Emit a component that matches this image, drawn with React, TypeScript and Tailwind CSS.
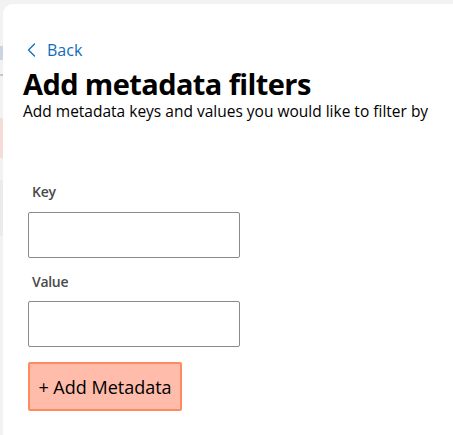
import React from "react";

export default function App() {
  return (
    <div className="flex h-[435px] w-[453px] overflow-hidden bg-[#f2f2f2]" style={{ fontFamily: "'Open Sans', 'Noto Sans', sans-serif" }}>
      <div className="flex w-[3px] shrink-0 flex-col">
        <div className="h-[46px]" />
        <div className="h-[14px] bg-[#c9d6e2]" />
        <div className="h-[14px]" />
        <div className="h-[2px] bg-[#c8c8c8]" />
        <div className="h-[42px]" />
        <div className="h-[40px] bg-[#f6dcd6]" />
        <div className="h-[22px]" />
        <div className="h-[56px] bg-[#ebebeb]" />
      </div>
      <div className="mt-[4px] flex flex-1 flex-col rounded-tl-[10px] bg-white pl-[20px]">
        <button className="mt-[36px] flex items-center gap-[11px] self-start pl-[4px] text-[16px] leading-[20px] text-[#0f6cbd]">
          <svg width="9" height="14" viewBox="0 0 9 14" fill="none">
            <path d="M7.5 1 L1.5 7 L7.5 13" stroke="#0f6cbd" strokeWidth="1.3" strokeLinecap="round" strokeLinejoin="round" />
          </svg>
          <span>Back</span>
        </button>
        <h1 className="mt-[6px] text-[29px] font-bold leading-[36px] tracking-[-0.6px] text-black">Add metadata filters</h1>
        <p className="mt-[-1px] text-[15.5px] leading-[20px] text-black">Add metadata keys and values you would like to filter by</p>
        <div className="mt-[62px] flex flex-col pl-[5px]">
          <label className="pl-[4px] text-[14px] font-semibold leading-[18px] tracking-[-0.3px] text-[#4a4a4a]">Key</label>
          <input className="mt-[11px] h-[46px] w-[212px] rounded-[2px] border border-[#8a8a8a] bg-white" />
          <label className="mt-[15px] pl-[4px] text-[14px] font-semibold leading-[18px] tracking-[-0.3px] text-[#4a4a4a]">Value</label>
          <input className="mt-[10px] h-[46px] w-[212px] rounded-[2px] border border-[#8a8a8a] bg-white" />
          <button className="mt-[15px] h-[49px] w-[154px] rounded-[2px] border-2 border-[#ff8a5c] bg-[#ffbcaa] text-[18px] leading-[22px] text-black">+ Add Metadata</button>
        </div>
      </div>
    </div>
  );
}
